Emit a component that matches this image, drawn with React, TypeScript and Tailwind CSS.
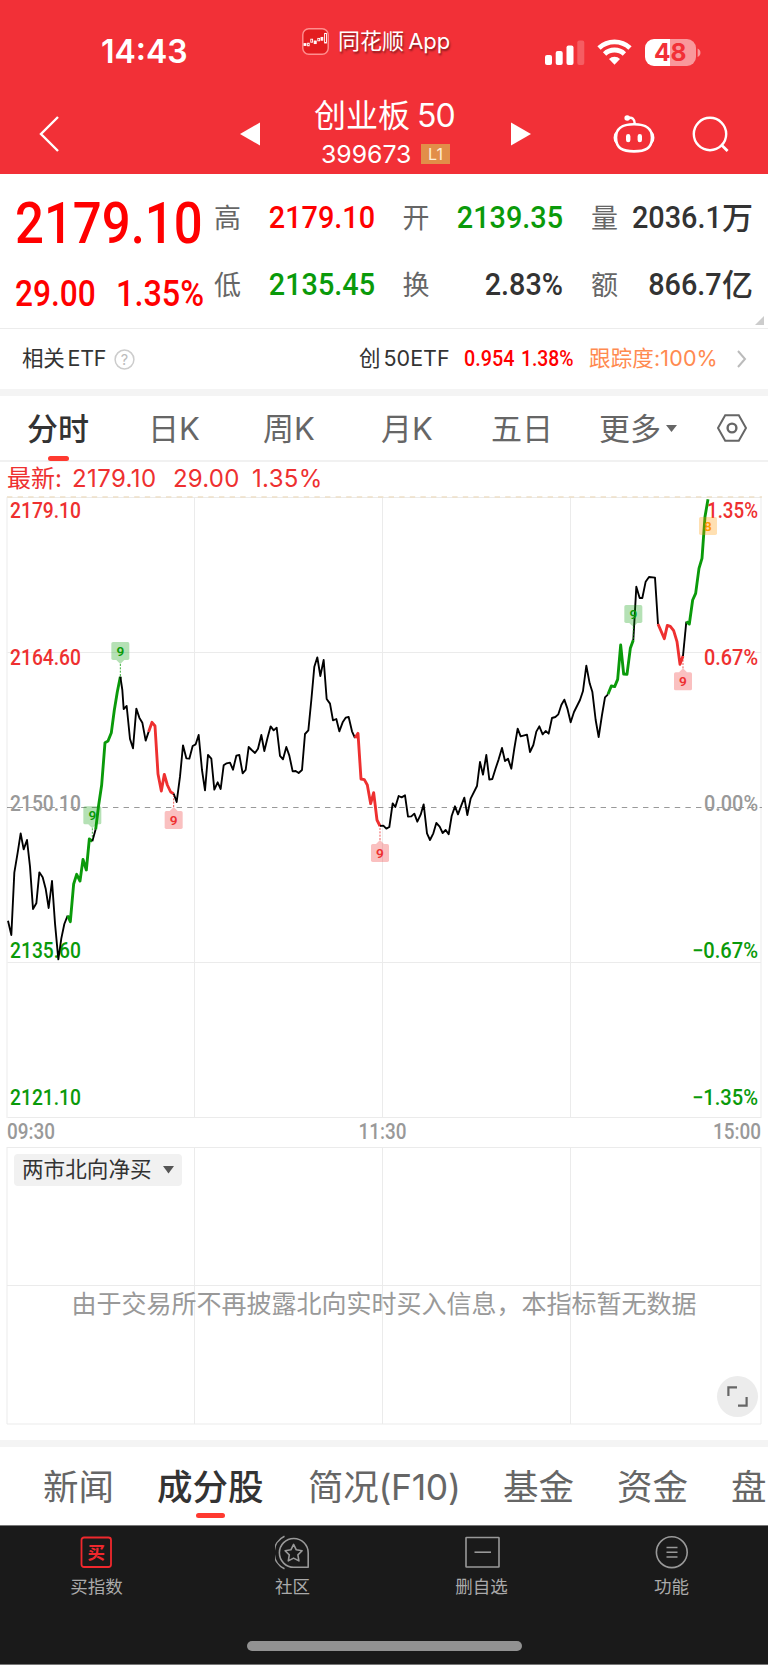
import type { ReactNode } from "react";

const SANS = "font-['Inter','Noto_Sans_CJK_SC',sans-serif]";
const DIN = "font-['Roboto','Noto_Sans_CJK_SC',sans-serif] font-medium";

type Tone = "black" | "green" | "red";

const TONE: Record<Tone, { stroke: string; width: number }> = {
  black: { stroke: "#000000", width: 5.6 },
  green: { stroke: "#0a9a0a", width: 8.6 },
  red: { stroke: "#ee3030", width: 8.6 },
};

// Minute line, cut wherever the nine-turn signal changes its colour.
const SEGMENTS: { tone: Tone; points: string }[] = [
  {
    tone: "black",
    points:
      "24,692 34,735 43,548 53,488 62,430 71,478 81,450 90,530 99,657 109,640 118,547 128,562 137,596 146,654 156,573 165,700 175,808 184,745 193,702 203,677",
  },
  { tone: "green", points: "203,677 211,695 221,582 230,553 240,573 249,508 259,540 268,447 277,454" },
  { tone: "black", points: "277,454 287,418" },
  { tone: "green", points: "287,418 296,345 305,285 315,158 324,153 334,128 343,60 352,5 361,-40" },
  {
    tone: "black",
    points: "361,-40 367,0 371,57 380,48 390,147 399,175 409,56 418,83 427,98 437,152 446,125",
  },
  { tone: "red", points: "446,125 456,97 465,108 474,252 484,303 493,253 502,285 512,306 521,311" },
  {
    tone: "black",
    points:
      "521,311 530,336 540,260 549,166 559,205 568,206 578,168 587,163 596,135 606,240 615,301 624,195 634,206 643,299 653,277 662,297 671,226 680,220 690,218 699,239 709,197 718,195 728,250 737,240 746,171 755,180 765,189 774,176 784,135 793,183 803,142 812,109 821,121 830,113 840,198 849,208 859,171 868,197 878,244 887,243 896,249 906,240 915,132 925,121 934,30 943,-70 952,-98 961,-42 971,-90 980,27 990,41 999,91 1009,87 1018,124 1028,97 1037,83 1046,81 1056,124 1065,144",
  },
  { tone: "red", points: "1065,144 1074,130 1083,267 1093,269 1102,285 1112,341 1121,308 1131,390 1140,408" },
  {
    tone: "black",
    points:
      "1140,408 1150,407 1159,416 1168,411 1178,340 1186,351 1196,318 1205,322 1215,316 1224,380 1234,379 1243,371 1252,395 1262,374 1271,343 1281,430 1290,450 1300,430 1309,399 1319,410 1328,429 1337,420 1346,433 1355,378 1365,349 1374,373 1384,346 1393,323 1402,375 1412,326 1431,288 1440,216 1449,254 1459,195 1468,269 1477,267 1487,235 1496,208 1506,174 1515,213 1524,206 1534,236 1543,175 1553,116 1562,139 1581,134 1590,186 1600,165 1609,125 1618,109 1628,133 1637,123 1646,131 1656,84 1666,81 1675,73 1684,45 1693,29 1702,55 1712,97 1722,66 1740,30 1749,3 1759,-73 1769,-20 1777,5 1787,90 1796,141 1806,75 1815,22 1824,13",
  },
  { tone: "green", points: "1824,13 1834,-12 1844,-10 1853,-32 1862,-135 1871,-48 1881,-47 1891,-125 1900,-150" },
  { tone: "black", points: "1900,-150 1909,-310 1919,-276 1927,-276 1937,-325 1947,-339 1965,-337 1974,-198" },
  { tone: "red", points: "1974,-198 1993,-154 2002,-194 2011,-191 2021,-178 2031,-145 2040,-77 2049,-102" },
  { tone: "black", points: "2049,-102 2059,-205" },
  { tone: "green", points: "2059,-205 2068,-198 2078,-270 2087,-290 2097,-365 2106,-395 2115,-520 2124,-572" },
];

const MARKERS = [
  { x: 361, y: -144, anchor: -40, color: "#0a9a0a", text: "9" },
  { x: 277, y: 349, anchor: 447, color: "#0a9a0a", text: "9" },
  { x: 521, y: 363, anchor: 311, color: "#ee3030", text: "9" },
  { x: 1140, y: 462, anchor: 408, color: "#ee3030", text: "9" },
  { x: 1900, y: -255, anchor: -150, color: "#0a9a0a", text: "9" },
  { x: 2049, y: -53, anchor: -102, color: "#ee3030", text: "9" },
  { x: 2124, y: -519, anchor: null, color: "#ff9900", text: "8" },
];

const AXIS = [
  { y: 26, price: "2179.10", pct: "1.35%", pctWidth: 51, color: "#ee3030" },
  { y: 172.5, price: "2164.60", pct: "0.67%", pctWidth: 54, color: "#ee3030" },
  { y: 319, price: "2150.10", pct: "0.00%", pctWidth: 54, color: "#999999" },
  { y: 466, price: "2135.60", pct: "−0.67%", pctWidth: 66, color: "#0a9a0a" },
  { y: 612.5, price: "2121.10", pct: "−1.35%", pctWidth: 66, color: "#0a9a0a" },
];

const PERIODS = [
  { label: "日K", width: "w-[115px]" },
  { label: "周K", width: "w-[118px]" },
  { label: "月K", width: "w-[110px]" },
  { label: "五日", width: "w-[108px]" },
];

export default function App() {
  return (
    <div className={`flex h-[1665px] w-[768px] flex-col overflow-hidden bg-white text-[#333] ${SANS}`}>
      <header className="h-[174px] bg-[#f23037] text-white">
        <StatusBar />
        <NavBar />
      </header>
      <Quote />
      <EtfRow />
      <div className="h-[7px] bg-[#f4f4f4]" />
      <PeriodTabs />
      <div className="flex h-[30px] items-center whitespace-pre pl-[7px] pt-1 text-[24px] leading-none text-[#ee3030]">
        <span className="w-[65px]">最新:</span>
        <span className="w-[101px] tracking-[0.4px]">2179.10</span>
        <span className="w-[79px] tracking-[0.2px]">29.00</span>
        <span className="tracking-[0.3px]">1.35%</span>
      </div>
      <PriceChart />
      <NorthChart />
      <div className="mt-3.5 h-[7px] bg-[#f4f4f4]" />
      <SectionTabs />
      <BottomBar />
    </div>
  );
}

function StatusBar() {
  return (
    <div className="flex h-[84px] items-center pl-[101px] pt-5">
      <span className="w-[201px] text-[32px] font-semibold leading-none">14:43</span>
      <div className="mb-[22px] flex w-[243px] items-center">
        <svg width="27" height="27" viewBox="0 0 27 27">
          <rect x="0.8" y="0.8" width="25.4" height="25.4" rx="6" fill="#e31d20" stroke="#ff8f8f" strokeWidth="1.4" />
          <g stroke="#fff" strokeWidth="0.9" fill="none">
            <rect x="2" y="15.6" width="2" height="1.8" fill="#fff" />
            <rect x="5.6" y="15.2" width="1.6" height="2.6" />
            <rect x="8.8" y="11.2" width="1.8" height="3" />
            <rect x="12.2" y="13" width="2" height="2.6" fill="#fff" />
            <rect x="15.8" y="10.4" width="1.8" height="2.4" />
            <rect x="19" y="9.4" width="1.8" height="2.8" fill="#fff" />
            <rect x="22.6" y="5.4" width="1.9" height="9.6" />
          </g>
        </svg>
        <span className="ml-[9px] whitespace-nowrap text-[22px] leading-none [text-shadow:1px_2px_2px_rgba(0,0,0,0.45)] [word-spacing:-2px]">
          同花顺 App
        </span>
      </div>
      <svg width="160" height="28" viewBox="0 0 160 28">
        <rect x="0" y="17" width="7" height="10" rx="2" fill="#fff" />
        <rect x="10.7" y="13" width="7" height="14" rx="2" fill="#fff" />
        <rect x="21.5" y="7.5" width="7" height="19.5" rx="2" fill="#fff" />
        <rect x="32.3" y="2.5" width="7" height="24.5" rx="2" fill="#fff" opacity="0.22" />
        <g fill="none" stroke="#fff" strokeWidth="4.8">
          <path d="M54 10a22.6 22.6 0 0 1 31 0" />
          <path d="M59.6 16a14.3 14.3 0 0 1 19.8 0" />
        </g>
        <path d="M64 21a7.6 7.6 0 0 1 11 0l-5.5 5.8z" fill="#fff" />
        <path d="M109 1H125V28H109A9 9 0 0 1 100 19V10A9 9 0 0 1 109 1Z" fill="#fff" />
        <path d="M125 1H142A9 9 0 0 1 151 10V19A9 9 0 0 1 142 28H125Z" fill="#fff" opacity="0.5" />
        <path d="M152.6 10.5a4.6 4.6 0 0 1 0 8.5z" fill="#fff" opacity="0.5" />
        <text x="125.3" y="23.3" textAnchor="middle" fontSize="24.5" fontWeight="700" fill="#f23037">
          48
        </text>
      </svg>
    </div>
  );
}

function NavBar() {
  return (
    <div className="flex h-[90px] items-center pl-[39px] pt-2.5">
      <svg width="20" height="36" viewBox="0 0 20 36" fill="none" stroke="#fff" strokeWidth="2.4">
        <path d="M19 1 2 18l17 17" />
      </svg>
      <svg className="ml-[181px]" width="20" height="24" viewBox="0 0 20 24">
        <path d="M0 12 20 0.5v23z" fill="#fff" />
      </svg>
      <div className="w-[251px] pl-[54px]">
        <div className="flex h-[34px] items-center gap-[7px] whitespace-nowrap pb-1 text-[32px] leading-none">
          <span>创业板</span>
          <span className="tracking-[-1px]">50</span>
        </div>
        <div className="mt-1.5 flex h-[26px] items-center pl-[7px]">
          <span className="w-[100px] text-[24.8px] leading-none">399673</span>
          <span className="flex h-5 w-[29px] items-center justify-center bg-[#e28e49] text-base leading-none text-[#ffedd5]">
            L1
          </span>
        </div>
      </div>
      <svg width="20" height="24" viewBox="0 0 20 24">
        <path d="M20 12 0 0.5v23z" fill="#fff" />
      </svg>
      <svg className="ml-[82px]" width="42" height="38" viewBox="0 0 42 38" fill="none" stroke="#fff">
        <path d="M21 9.2C30 9.2 39 11.5 39 22.6S32 36.4 21 36.4 3 33.8 3 22.6 12 9.2 21 9.2Z" strokeWidth="2.6" />
        <path d="M15 3c4-1.2 6.8.8 6.8 6" strokeWidth="2.5" />
        <circle cx="14.2" cy="3" r="2.8" fill="#fff" stroke="none" />
        <path d="M3.2 17.4c-2.6 2-2.6 8.6 0 10.6zM38.8 17.4c2.6 2 2.6 8.6 0 10.6z" fill="#fff" strokeWidth="1.4" />
        <path d="M15.2 21.2v3.8M26.8 21.2v3.8" strokeWidth="4.4" strokeLinecap="round" />
      </svg>
      <svg className="ml-[37px]" width="38" height="38" viewBox="0 0 38 38" fill="none" stroke="#fff" strokeWidth="2.4">
        <circle cx="18" cy="19" r="16.2" />
        <path d="m29 29.5 6.6 6.6" strokeWidth="2.8" />
      </svg>
    </div>
  );
}

function Quote() {
  return (
    <section className="relative flex h-[155px] border-b border-[#ececec] pl-[15px] pr-3.5">
      <div className={`w-[199px] whitespace-nowrap pt-[25px] leading-none text-[#ff0000] ${DIN}`}>
        <div className="flex h-[49px] origin-left scale-x-[.885] items-center text-[57.5px]">2179.10</div>
        <div className="mt-[21px] flex h-[50px] items-center text-[36px]">
          <span className="w-[103px] origin-left scale-x-[.88]">29.00</span>
          <span className="origin-left scale-x-[.9]">1.35%</span>
        </div>
      </div>
      <div className="grid flex-1 grid-cols-[161px_161px_162px] content-start gap-x-[27.5px] gap-y-[23px] pt-[22px]">
        <Stat label="高" tone="text-[#ff0000]">2179.10</Stat>
        <Stat label="开" tone="text-[#0a9a0a]">2139.35</Stat>
        <Stat label="量" tone="text-[#333]" unit="万">2036.1</Stat>
        <Stat label="低" tone="text-[#0a9a0a]">2135.45</Stat>
        <Stat label="换" tone="text-[#333]">2.83%</Stat>
        <Stat label="额" tone="text-[#333]" unit="亿">866.7</Stat>
      </div>
      <svg className="absolute bottom-[3px] right-1" width="9" height="9" viewBox="0 0 9 9">
        <path d="M9 0v9H0z" fill="#ccc" />
      </svg>
    </section>
  );
}

function Stat({ label, tone, unit, children }: { label: string; tone: string; unit?: string; children: ReactNode }) {
  return (
    <div className="flex h-11 items-center justify-between leading-none">
      <span className="text-[27px] text-[#666]">{label}</span>
      <div className={`flex items-center ${tone} ${DIN}`}>
        <span className="origin-right scale-x-90 pb-0.5 text-[32px]">{children}</span>
        {unit && <span className="w-[31px] text-[31px]">{unit}</span>}
      </div>
    </div>
  );
}

function EtfRow() {
  return (
    <div className="flex h-[60px] items-center whitespace-nowrap pl-[22px] text-[21.5px] leading-none">
      <span className="w-[92px] tracking-[-0.2px] [word-spacing:-3px]">相关 ETF</span>
      <svg width="21" height="21" viewBox="0 0 21 21">
        <circle cx="10.5" cy="10.5" r="9.4" fill="none" stroke="#ccc" strokeWidth="1.5" />
        <text x="10.5" y="15.6" textAnchor="middle" fontSize="14.5" fill="#bbb">
          ?
        </text>
      </svg>
      <span className="ml-[224px] w-[105px] [word-spacing:-3px]">创 50ETF</span>
      <span className={`w-[57px] origin-left scale-x-[.92] text-[#ff0000] ${DIN}`}>0.954</span>
      <span className={`w-[68px] origin-left scale-x-[.9] text-[#ff0000] ${DIN}`}>1.38%</span>
      <span className="w-[148px] tracking-[0.15px] text-[#ff8a50]">跟踪度:100%</span>
      <svg width="10" height="18" viewBox="0 0 10 18" fill="none" stroke="#bbb" strokeWidth="2">
        <path d="m1 1 7 8-7 8" />
      </svg>
    </div>
  );
}

function PeriodTabs() {
  return (
    <div className="flex h-[66px] items-center border-b-2 border-[#f1f1f1] pl-[27px] text-[31px] leading-none text-[#666]">
      <div className="relative w-[121px] font-medium text-[#333]">
        分时
        <span className="absolute -bottom-[17px] left-[21px] h-[5px] w-[21px] rounded-full bg-[#ff3a30]" />
      </div>
      {PERIODS.map((p) => (
        <div key={p.label} className={p.width}>
          {p.label}
        </div>
      ))}
      <div className="flex w-[118px] items-center gap-[5px]">
        更多
        <svg width="11" height="7" viewBox="0 0 11 7">
          <path d="M0 0h11L5.5 7z" fill="#666" />
        </svg>
      </div>
      <svg width="30" height="28" viewBox="0 0 30 28" fill="none" stroke="#666" strokeWidth="2">
        <path d="M8.2 1.3h13.6L29 14l-7.2 12.7H8.2L1 14z" />
        <circle cx="15" cy="14" r="4.4" strokeWidth="2.4" />
      </svg>
    </div>
  );
}

function PriceChart() {
  return (
    <svg
      className="h-[654px] w-[768px] shrink-0 font-['Roboto',sans-serif] font-medium"
      viewBox="0 0 768 654"
      fontSize="21.6"
    >
      <g stroke="#ebebeb" strokeWidth="1" fill="none">
        <path d="M7.5 5.5H761M7.5 160.5H761M7.5 470.5H761M7.5 625.5H761" />
        <path d="M7 5V626M194.5 5V626M382.5 5V626M570.5 5V626M761 5V626" />
      </g>
      <path d="M7 5H762" stroke="#eedfc8" strokeWidth="1.6" strokeDasharray="5.4 5.2" />
      <path d="M7 315.5H762" stroke="#999" strokeWidth="1.2" strokeDasharray="5.4 5.2" />

      {AXIS.map((a) => (
        <g key={a.price} fill={a.color}>
          <text x="10" y={a.y} textLength="71" lengthAdjust="spacingAndGlyphs">
            {a.price}
          </text>
          <text x="758" y={a.y} textAnchor="end" textLength={a.pctWidth} lengthAdjust="spacingAndGlyphs">
            {a.pct}
          </text>
        </g>
      ))}

      <g transform="translate(0 198) scale(0.33333)" fill="none" strokeLinejoin="round">
        {SEGMENTS.map((s) => (
          <polyline key={s.points} points={s.points} stroke={TONE[s.tone].stroke} strokeWidth={TONE[s.tone].width} />
        ))}
        {MARKERS.map((m) => (
          <Marker key={m.x} {...m} />
        ))}
      </g>

      <g fill="#999">
        <text x="7" y="647" textLength="48" lengthAdjust="spacingAndGlyphs">09:30</text>
        <text x="382.5" y="647" textAnchor="middle" textLength="48" lengthAdjust="spacingAndGlyphs">11:30</text>
        <text x="761" y="647" textAnchor="end" textLength="48" lengthAdjust="spacingAndGlyphs">15:00</text>
      </g>
    </svg>
  );
}

function Marker({ x, y, anchor, color, text }: (typeof MARKERS)[number]) {
  const below = anchor !== null && anchor > y;
  const base = below ? y + 54 : y;
  const tip = below ? base + 12 : base - 12;
  return (
    <g>
      {anchor !== null && (
        <>
          <path d={`M${x} ${tip}V${anchor}`} stroke={color} strokeWidth="3" strokeDasharray="6 4" opacity="0.8" />
          <path d={`M${x - 12} ${base}L${x} ${tip}L${x + 12} ${base}Z`} fill={color} opacity="0.3" />
        </>
      )}
      <rect x={x - 27} y={y} width="54" height="54" rx="5" fill={color} opacity="0.3" />
      <text x={x} y={y + 42} textAnchor="middle" fontSize="41" fontWeight="600" fill={color}>
        {text}
      </text>
    </g>
  );
}

function NorthChart() {
  return (
    <div className="relative h-[280px] shrink-0">
      <svg className="absolute inset-0" width="768" height="280" viewBox="0 0 768 280" stroke="#ebebeb" fill="none">
        <path d="M7 1.5H761M7 139.5H761M7 278H761M7 1V278M194.5 1V278M382.5 1V278M570.5 1V278M761 1V278" />
      </svg>
      <div className="relative flex h-full flex-col items-center pt-2">
        <button className="ml-3.5 flex h-8 w-[168px] items-center gap-[11px] self-start rounded bg-[#f1f1f1] pl-2 text-[21.6px] leading-none text-[#333]">
          两市北向净买
          <svg width="11" height="8" viewBox="0 0 11 8">
            <path d="M0 0h11L5.5 7.5z" fill="#555" />
          </svg>
        </button>
        <p className="mt-[106px] whitespace-nowrap text-[25px] leading-none text-[#999]">
          由于交易所不再披露北向实时买入信息，本指标暂无数据
        </p>
      </div>
      <button className="absolute bottom-[9px] right-2.5 flex size-[41px] items-center justify-center rounded-full bg-[#ececec]">
        <svg width="21" height="21" viewBox="0 0 21 21" fill="none" stroke="#666" strokeWidth="2.2">
          <path d="M1.4 10V1.4H10M19.6 11v8.6H11" />
        </svg>
      </button>
    </div>
  );
}

function SectionTabs() {
  return (
    <div className="flex h-[78px] shrink-0 items-center whitespace-nowrap pl-[43px] pt-[3px] text-[35.5px] leading-none text-[#666]">
      <span className="w-[114px]">新闻</span>
      <div className="relative w-[151px] font-medium text-[#333]">
        成分股
        <span className="absolute -bottom-[13px] left-[39px] h-[5px] w-[29px] rounded-full bg-[#ff3a30]" />
      </div>
      <span className="w-[195px] tracking-[-0.3px]">简况(F10)</span>
      <span className="w-[114px]">基金</span>
      <span className="w-[114px]">资金</span>
      <span>盘</span>
    </div>
  );
}

function BottomBar() {
  return (
    <footer className="flex h-[140px] shrink-0 flex-col items-center border-y border-[#777] bg-[#1a1a1a]">
      <nav className="flex w-full pl-[51px] text-[#aaa]">
        <BarItem label="买指数" width="w-[91px]">
          <rect x="2.5" y="2.5" width="29.5" height="29.5" rx="2.5" stroke="#f0282d" strokeWidth="1.8" />
          <text x="17.3" y="24" textAnchor="middle" fontSize="17.5" fontWeight="700" fill="#f0282d" stroke="none">
            买
          </text>
        </BarItem>
        <BarItem label="社区" width="ml-[105px] w-[91px]">
          <path d="M32.5 32.3H18.8A14.4 14.4 0 1 1 33.2 18v14.3z" />
          <path d="M9.5 1.2a18 18 0 0 0 0 32.6" />
          <path d="m18.6 9.4 2.7 5.4 5.8.9-4.2 4.2 1 6-5.3-2.8-5.3 2.8 1-6-4.2-4.2 5.8-.9z" />
        </BarItem>
        <BarItem label="删自选" width="ml-[98px] w-[91px]">
          <rect x="2" y="2.5" width="33" height="29.5" rx="0.5" />
          <path d="M10.5 17.2h16.5" />
        </BarItem>
        <BarItem label="功能" width="ml-[99px] w-[91px]">
          <circle cx="17.8" cy="17.2" r="15.4" />
          <path d="M12.5 12.5h11M12.5 17.2h11M12.5 22h11" />
        </BarItem>
      </nav>
      <div className="mt-[45px] h-2.5 w-[275px] rounded-full bg-[#929292]" />
    </footer>
  );
}

function BarItem({ label, width, children }: { label: string; width: string; children: ReactNode }) {
  return (
    <div className={`flex flex-col items-center pt-[9px] ${width}`}>
      <svg width="36" height="36" viewBox="0 0 36 36" fill="none" stroke="#999" strokeWidth="1.6" strokeLinejoin="round">
        {children}
      </svg>
      <span className="mt-[7px] text-[17.5px] leading-none">{label}</span>
    </div>
  );
}
